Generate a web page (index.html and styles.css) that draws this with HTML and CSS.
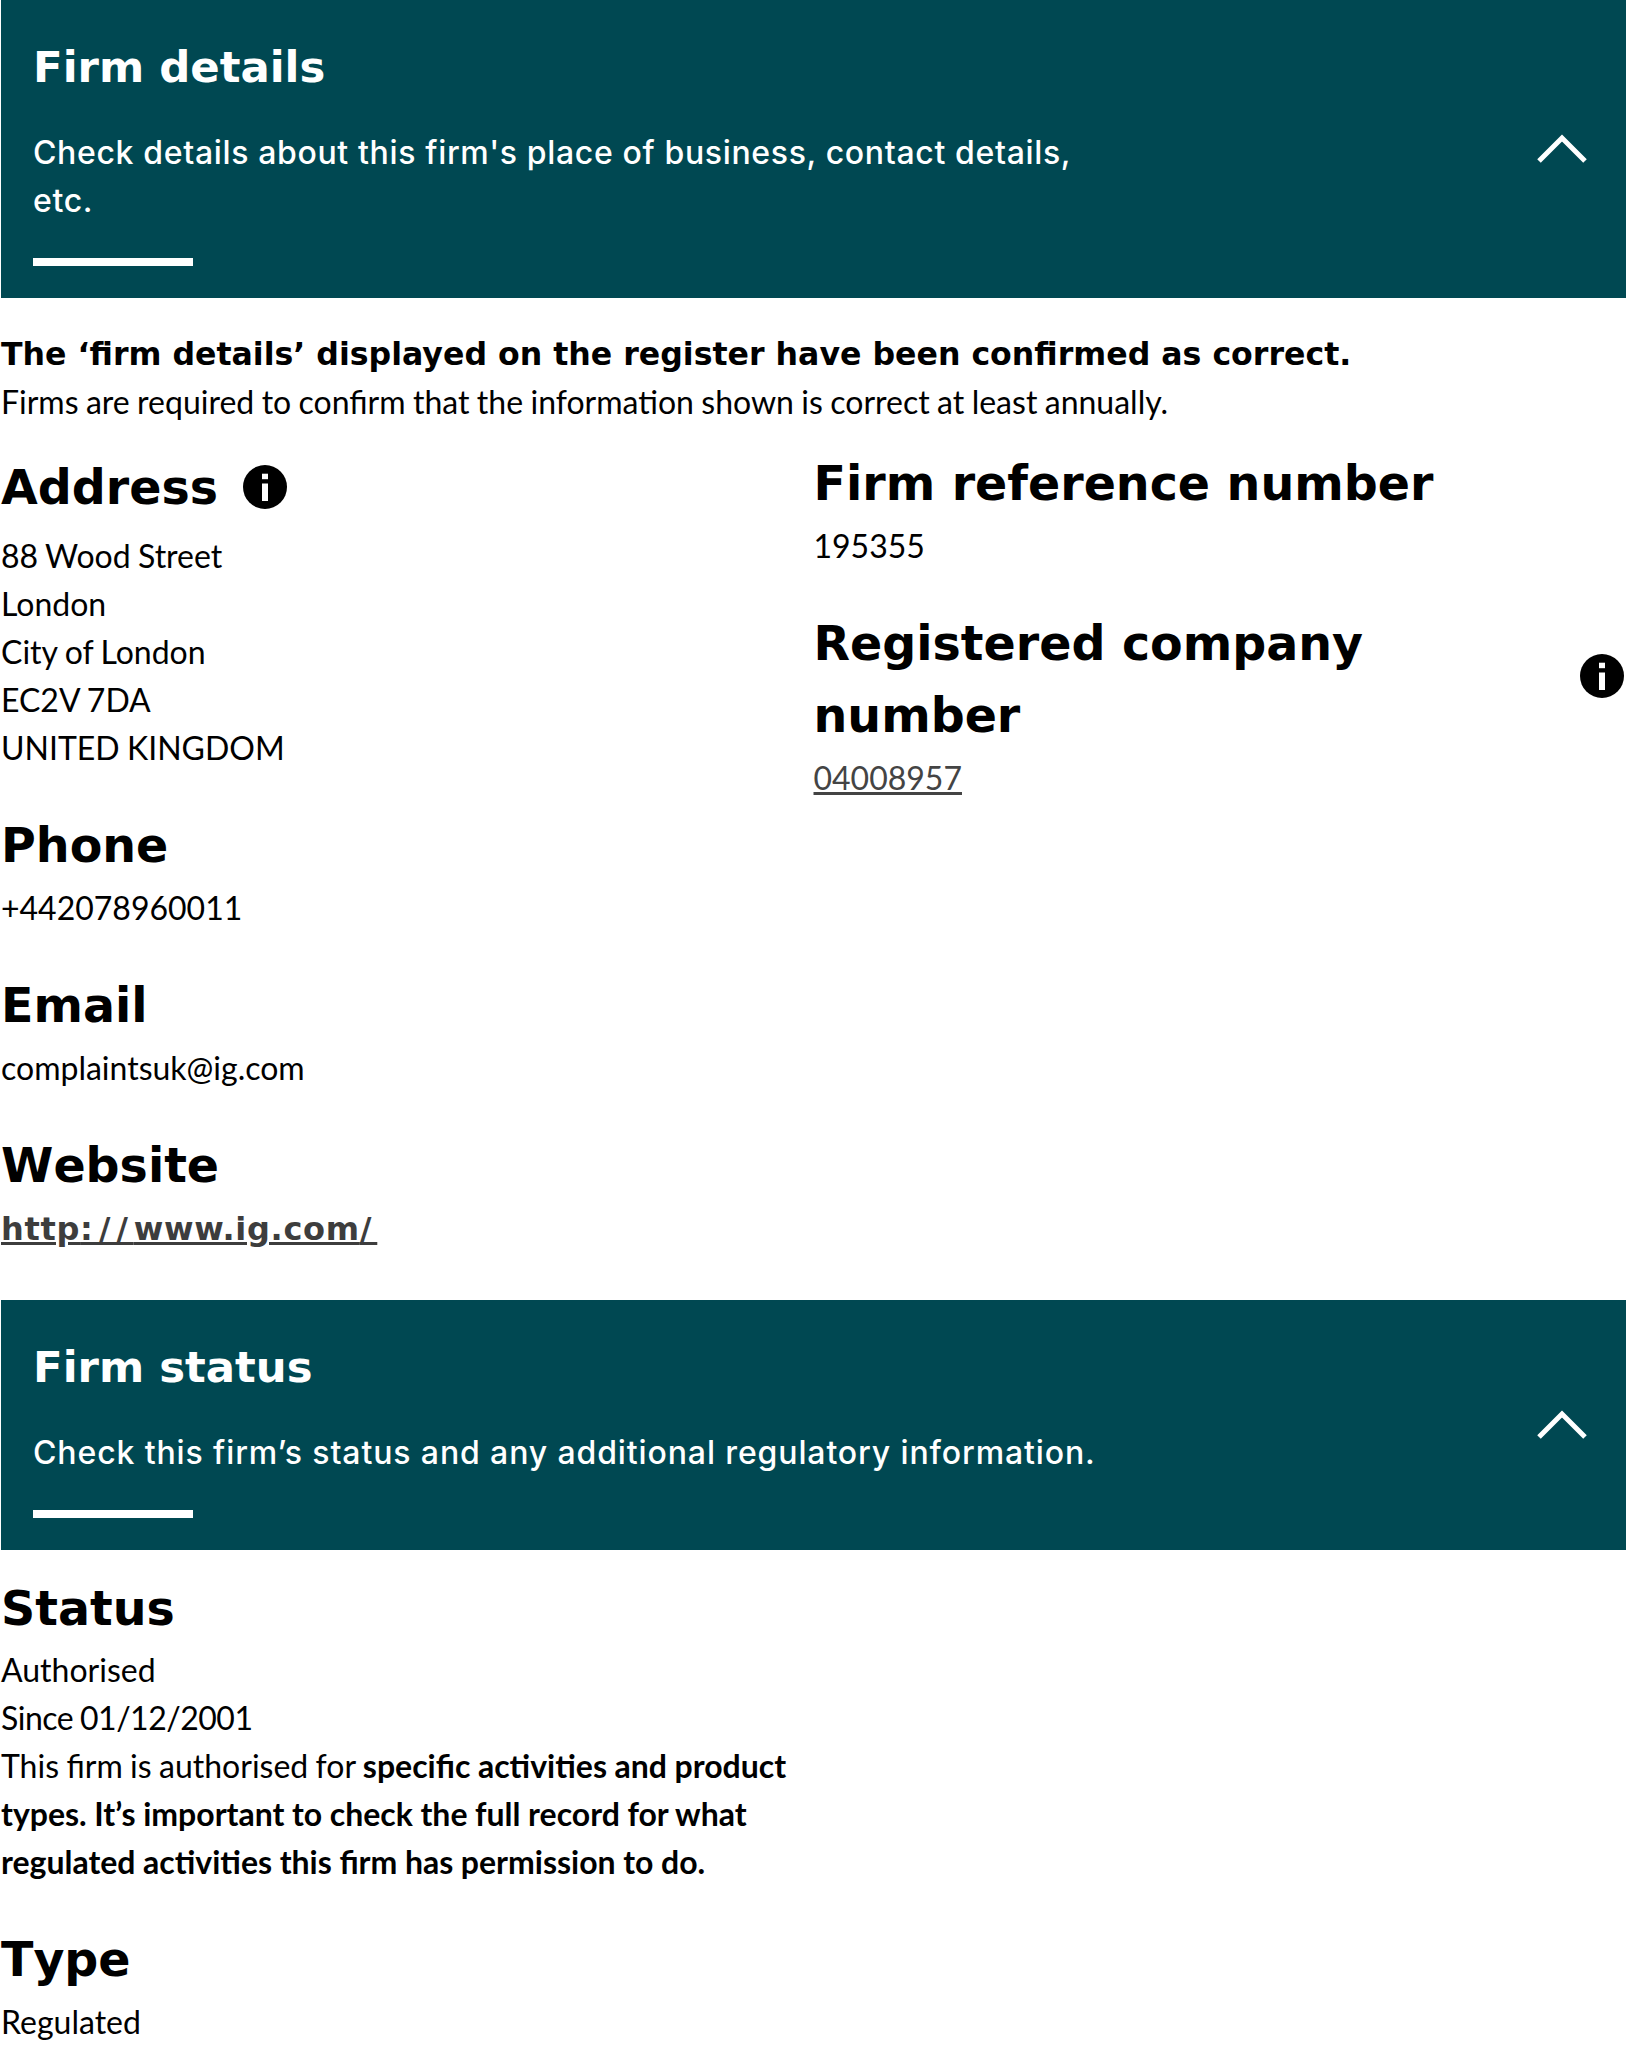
FILE: index.html
```html
<!DOCTYPE html>
<html lang="en">
<head>
    <meta charset="UTF-8">
    <title>Firm details</title>
    <link rel="stylesheet" href="styles.css">
</head>
<body>
    <!-- Firm details -->
    <div class="banner">
        <div class="banner-text">
            <h2>Firm details</h2>
            <p>Check details about this firm's place of business, contact details, etc.</p>
            <div class="rule"></div>
        </div>
        <svg class="chevron" viewBox="0 0 52 30"><path d="M3 27 L26 4 L49 27"/></svg>
    </div>

    <div class="notice">
        <strong>The ‘firm details’ displayed on the register have been confirmed as correct.</strong>
        <p>Firms are required to confirm that the information shown is correct at least annually.</p>
    </div>

    <div class="columns">
        <div class="column">
            <div class="heading-row address-row">
                <h3>Address</h3>
                <svg class="info" viewBox="0 0 44 44"><circle cx="22" cy="22" r="22"/><rect x="19" y="8.7" width="6" height="5.5" fill="#fff"/><rect x="19" y="18.5" width="6" height="17.5" fill="#fff"/></svg>
            </div>
            <p>88 Wood Street</p>
            <p>London</p>
            <p>City of London</p>
            <p>EC2V 7DA</p>
            <p>UNITED KINGDOM</p>

            <h3 class="spaced">Phone</h3>
            <p>+442078960011</p>

            <h3 class="spaced">Email</h3>
            <p>complaintsuk@ig.com</p>

            <h3 class="spaced">Website</h3>
            <p><a class="site-link" href="#">http<span class="slash">://</span>www.ig.com<span class="slash">/</span></a></p>
        </div>
        <div class="column">
            <h3>Firm reference number</h3>
            <p>195355</p>

            <div class="heading-row wide spaced">
                <h3 class="narrow">Registered company number</h3>
                <svg class="info raised" viewBox="0 0 44 44"><circle cx="22" cy="22" r="22"/><rect x="19" y="8.7" width="6" height="5.5" fill="#fff"/><rect x="19" y="18.5" width="6" height="17.5" fill="#fff"/></svg>
            </div>
            <p><a class="number-link" href="#">04008957</a></p>
        </div>
    </div>

    <!-- Firm status -->
    <div class="banner">
        <div class="banner-text">
            <h2>Firm status</h2>
            <p class="loose">Check this firm’s status and any additional regulatory information.</p>
            <div class="rule"></div>
        </div>
        <svg class="chevron" viewBox="0 0 52 30"><path d="M3 27 L26 4 L49 27"/></svg>
    </div>

    <div class="status">
        <h3 class="status-title">Status</h3>
        <p>Authorised</p>
        <p class="since">Since 01/12/2001</p>
        <p class="status-note">This firm is authorised for <b>specific activities and product types. It’s important to check the full record for what regulated activities this firm has permission to do.</b></p>

        <h3 class="spaced">Type</h3>
        <p>Regulated</p>
    </div>
</body>
</html>
```

FILE: styles.css
```css
body {
    margin: 0;
    padding-left: 1px;
    background-color: #fff;
    color: #000;
    font-family: "Lato", "Liberation Sans", sans-serif;
    font-size: 32px;
    line-height: 48px;
    word-spacing: -0.8px;
}

p {
    margin: 0;
}

b {
    word-spacing: -0.2px;
}

h2, h3 {
    margin: 0;
    font-family: "DejaVu Sans", sans-serif;
    font-weight: bold;
    font-kerning: none;
    word-spacing: 0;
}

h3 {
    font-size: 47.5px;
    line-height: 72px;
    margin-bottom: 2px;
}

.banner {
    display: flex;
    justify-content: space-between;
    align-items: center;
    background-color: #004852;
    color: #fff;
    padding: 32px 38px 32px 32px;
}

.banner-text {
    width: 1100px;
}

.banner h2 {
    font-size: 43.4px;
    line-height: 70px;
    margin-bottom: 27px;
}

.banner p {
    font-family: "Inter", sans-serif;
    font-weight: 500;
    font-size: 32px;
    letter-spacing: 0.65px;
    word-spacing: 0;
}

.banner p.loose {
    letter-spacing: 0.88px;
}

.rule {
    width: 160px;
    height: 8px;
    margin-top: 33px;
    background-color: #fff;
}

.chevron {
    width: 52px;
    height: 30px;
    flex: none;
}

.chevron path {
    fill: none;
    stroke: #fff;
    stroke-width: 5;
}

.notice {
    margin-top: 32px;
}

.notice strong {
    display: block;
    font-family: "DejaVu Sans", sans-serif;
    font-size: 31.6px;
    word-spacing: 0;
}

.columns {
    display: flex;
    margin-top: 22px;
    margin-bottom: 47px;
}

.column {
    width: 813px;
}

.heading-row {
    display: flex;
    align-items: center;
    gap: 25px;
}

.address-row {
    margin-top: 4px;
    margin-bottom: 6px;
}

.address-row .info {
    margin-bottom: 5px;
}

.heading-row.wide {
    justify-content: space-between;
    padding-right: 2px;
}

.narrow {
    width: 620px;
}

.info {
    width: 44px;
    height: 44px;
    flex: none;
}

.info.raised {
    margin-bottom: 10px;
}

.spaced {
    margin-top: 38px;
}

.site-link {
    font-family: "DejaVu Sans", sans-serif;
    font-weight: bold;
    letter-spacing: 0.7px;
    color: #3d3d3d;
}

.slash {
    letter-spacing: 5.8px;
}

.number-link {
    color: #444;
}

.status {
    margin-top: 23px;
}

.status-title {
    margin-bottom: 1px;
}

.since {
    letter-spacing: -0.5px;
}

.status-note {
    width: 800px;
}
```
